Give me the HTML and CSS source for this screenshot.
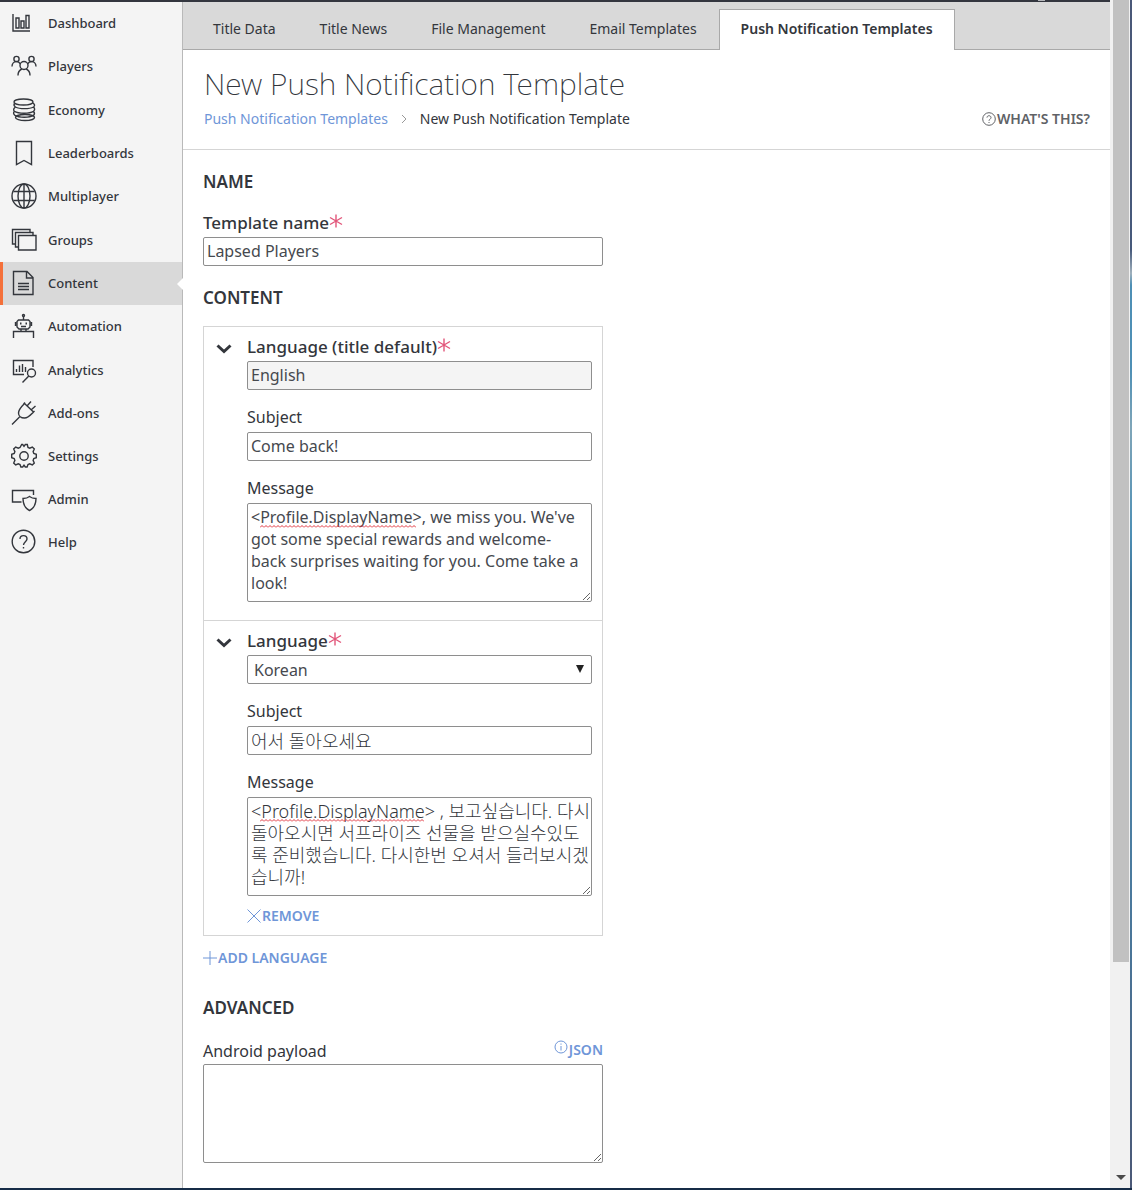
FILE: index.html
```
<!DOCTYPE html>
<html lang="en">
<head>
<meta charset="utf-8">
<title>New Push Notification Template</title>
<meta name="viewport" content="width=device-width, initial-scale=1">
<link rel="stylesheet" href="styles.css">
</head>
<body>
<svg class="defs" aria-hidden="true">
  <symbol id="star" viewBox="0 0 14 14"><path d="M7 .5v13M1 3.500l12 7M13 3.500l-12 7"/></symbol>
  <symbol id="chevron" viewBox="0 0 16 10"><path d="M1.500 1.500L8 7.500l6.500-6"/></symbol>
  <pattern id="wave" width="4" height="3" patternUnits="userSpaceOnUse"><path d="M0 2.500L2 .5l2 2" fill="none" stroke="#e0323c"/></pattern>
</svg>
<div class="window">
  <div class="page">
    <div class="topbar"><span class="topbar-mark"></span></div>
    <div class="app">
      <nav class="sidebar" aria-label="Main">
        <a href="#"><svg viewBox="0 0 26 26"><path d="M2 4v17h17M5 8h3v10H5zM10 11h3v7h-3zM15 5.500h3V18h-3z"/></svg>Dashboard</a>
        <a href="#"><svg viewBox="0 0 26 26"><circle cx="5.500" cy="6" r="2.600"/><circle cx="20.500" cy="6" r="2.600"/><circle cx="13" cy="12.500" r="4"/><path d="M1 13.500c0-3 2-5 4.500-5 2 0 3 1 4 2.500M25 13.500c0-3-2-5-4.500-5-2 0-3 1-4 2.500M7 22.500c0-3.500 1.500-5.500 3.800-6.500M19 22.500c0-3.500-1.500-5.500-3.800-6.500"/></svg>Players</a>
        <a href="#"><svg viewBox="0 0 26 26"><ellipse cx="12.500" cy="5" rx="9.500" ry="3"/><path d="M3.500 6.500C2.500 8 3 9 4.500 10c4 2.200 14 2.200 18 0 1.500-1 1.500-2.500-.5-4M4.500 10C2.500 11.500 2 13 3.500 14.300c4 2.500 15 2.500 19 0 1.500-1.300 1.500-2.800 0-4.300M3.500 14.300c-1.500 1.500-1 3 .5 4 4 2.500 14.500 2.500 18.500 0 1.200-1 1.200-2.500 0-4"/><ellipse cx="14" cy="20.500" rx="9.500" ry="3"/></svg>Economy</a>
        <a href="#"><svg viewBox="0 0 26 26"><path d="M5.500 1.500h15V24.500L13 20.500l-7.500 4z"/></svg>Leaderboards</a>
        <a href="#"><svg viewBox="0 0 26 26"><circle cx="13" cy="13" r="12"/><ellipse cx="13" cy="13" rx="6" ry="12"/><path d="M13 1v24M2.500 8.500h21M2.500 17.500h21"/></svg>Multiplayer</a>
        <a href="#"><svg viewBox="0 0 26 26"><path d="M7.500 8.500h17.500v14.500H7.500zM7.500 20H4.500V5.500h17.500v3M4.500 17H1.500V2.500h17.500v3"/></svg>Groups</a>
        <a href="#" class="current" aria-current="page"><svg viewBox="0 0 26 26"><path d="M2.500 1.500h13.500l6 6V24.500H2.500zM15.500 1.500v6.500H22M7 13.500h11M7 16.500h11M7 19.500h11"/></svg>Content</a>
        <a href="#"><svg viewBox="0 0 26 26"><circle cx="12.500" cy="2.500" r="1"/><path d="M12.500 3.500V7M7.500 7h10l1.500 1.500V14l-2 2H8l-2-2V8.500zM4.500 9v4M20.500 9v4M10 16v2.500M15 16v2.500M2.500 25v-6.500h20V25M10 13.500h5"/><path d="M9 10.500h1.500M14.500 10.500H16" stroke-width="2"/></svg>Automation</a>
        <a href="#"><svg viewBox="0 0 26 26"><path d="M13 17.500H2.500v-14H22V10M5.500 15v-3M8.500 15V8.500M11.500 15V7M14.500 15v-5"/><circle cx="20.500" cy="16" r="4"/><path d="M17.800 19l-6.300 6.500"/></svg>Analytics</a>
        <a href="#"><svg viewBox="0 0 26 26"><path d="M1 24.500l7.500-7.500M7.500 13c0-3.500 3.500-7 6-9.500l9 8.500c-3 3-5 6-9 6-3.500 0-6-2-6-5zM12.500 4l1.500-1.500M22 12.500l1.500-1.500M16 6l4-4.500M20 10l4.500-4"/></svg>Add-ons</a>
        <a href="#"><svg viewBox="0 0 26 26"><circle cx="13" cy="13" r="4.200"/><path d="M10.700 1.500h1l1.300 1.800 1.300-1.800h2l.7 3 1.700.7 2.600-1.200 2 2-1.200 2.600.7 1.900 2.500.8v3.400l-2.500.8-.7 1.900 1.200 2.600-2 2-2.600-1.200-1.700.7-.9 2.500h-1.800l-1.300-1.800-1.300 1.800h-1.800l-.9-2.500-1.700-.7-2.600 1.200-2-2 1.200-2.600-.7-1.900-2.500-.8v-3.400l2.500-.8.7-1.900-1.200-2.600 2-2 2.600 1.200 1.700-.7z"/></svg>Settings</a>
        <a href="#"><svg viewBox="0 0 26 26"><path d="M10.500 16H1.500V4.500H22.500V9M18.500 10.500c1.800 1.500 4 2 6.500 2 0 6-1.500 9.500-6.500 12-5-2.500-6.500-6-6.500-12 2.500 0 4.700-.5 6.500-2z"/></svg>Admin</a>
        <a href="#"><svg viewBox="0 0 26 26"><circle cx="12.500" cy="12.500" r="11.300"/><path d="M9 10c0-4.500 7-4.500 7 0 0 2.500-3.500 3-3.500 6M12.500 18v1.500"/></svg>Help</a>
      </nav>
      <main class="main">
        <nav class="tabs" aria-label="Content">
          <a href="#">Title Data</a>
          <a href="#">Title News</a>
          <a href="#">File Management</a>
          <a href="#">Email Templates</a>
          <a href="#" class="active" aria-current="page">Push Notification Templates</a>
        </nav>
        <header class="page-head">
          <h1>New Push Notification Template</h1>
          <div class="crumb-row">
            <a href="#" class="crumb-link">Push Notification Templates</a>
            <svg class="crumb-sep" viewBox="0 0 6 10"><path d="M1 1l4 4-4 4"/></svg>
            <span>New Push Notification Template</span>
            <button type="button" class="whats-this"><svg viewBox="0 0 14 14"><circle cx="7" cy="7" r="6.300"/><path d="M5 5.600c0-2.500 4-2.500 4 0 0 1.400-2 1.700-2 3.200M7 10v1"/></svg>WHAT'S THIS?</button>
          </div>
        </header>
        <form class="form">
          <h2>NAME</h2>
          <div class="field">
            <label class="strong" for="name">Template name<svg class="star"><use href="#star"/></svg></label>
            <input type="text" id="name" value="Lapsed Players">
          </div>

          <h2>CONTENT</h2>
          <div class="languages">
            <section class="language">
              <button type="button" class="toggle" aria-label="Collapse English"><svg><use href="#chevron"/></svg></button>
              <div class="fields">
                <div class="field">
                  <label class="strong" for="lang1">Language (title default)<svg class="star"><use href="#star"/></svg></label>
                  <input type="text" id="lang1" value="English" readonly>
                </div>
                <div class="field">
                  <label for="subject1">Subject</label>
                  <input type="text" id="subject1" value="Come back!">
                </div>
                <div class="field message">
                  <label for="message1">Message</label>
                  <textarea id="message1" spellcheck="false">&lt;Profile.DisplayName&gt;, we miss you. We've got some special rewards and welcome-back surprises waiting for you. Come take a look!</textarea>
                  <svg class="squiggle" aria-hidden="true"><rect width="100%" height="3" fill="url(#wave)"/></svg>
                </div>
              </div>
            </section>
            <section class="language">
              <button type="button" class="toggle" aria-label="Collapse Korean"><svg><use href="#chevron"/></svg></button>
              <div class="fields">
                <div class="field">
                  <label class="strong" for="lang2">Language<svg class="star"><use href="#star"/></svg></label>
                  <div class="select">
                    <select id="lang2"><option>Korean</option></select>
                    <svg viewBox="0 0 8 8" aria-hidden="true"><path d="M0 0h8L4 8z"/></svg>
                  </div>
                </div>
                <div class="field">
                  <label for="subject2">Subject</label>
                  <input type="text" id="subject2" class="korean" lang="ko" value="어서 돌아오세요">
                </div>
                <div class="field message">
                  <label for="message2">Message</label>
                  <textarea id="message2" class="korean" lang="ko" spellcheck="false">&lt;Profile.DisplayName&gt; , 보고싶습니다. 다시
돌아오시면 서프라이즈 선물을 받으실수있도
록 준비했습니다. 다시한번 오셔서 들러보시겠
습니까!</textarea>
                  <svg class="squiggle" aria-hidden="true"><rect width="100%" height="3" fill="url(#wave)"/></svg>
                </div>
                <button type="button" class="action remove"><svg viewBox="0 0 14 14"><path d="M.5.5l13 13M13.500.5l-13 13"/></svg>REMOVE</button>
              </div>
            </section>
          </div>
          <button type="button" class="action add"><svg viewBox="0 0 14 14"><path d="M7 0v14M0 7h14"/></svg>ADD LANGUAGE</button>

          <h2>ADVANCED</h2>
          <div class="field">
            <div class="label-row">
              <label for="android">Android payload</label>
              <a href="#" class="action"><svg class="info" viewBox="0 0 14 14"><circle cx="7" cy="7" r="6"/><path d="M7 6v4.500M7 3.500v1.200"/></svg>JSON</a>
            </div>
            <textarea id="android"></textarea>
          </div>
        </form>
      </main>
    </div>
  </div>
  <div class="scrollbar" aria-hidden="true">
    <div class="thumb"></div>
    <svg viewBox="0 0 10 5"><path d="M0 0h10L5 5z"/></svg>
  </div>
  <div class="window-edge"></div>
</div>
<div class="window-foot"></div>
</body>
</html>
```
FILE: styles.css
```
* { box-sizing: border-box; }

body {
  display: flex;
  flex-direction: column;
  min-height: 100vh;
  margin: 0;
  background: #fff;
  color: #33363c;
  font: 400 16px/22px "Noto Sans", "Open Sans", "Noto Sans CJK KR", sans-serif;
}

svg { fill: none; stroke: currentColor; flex: none; }
a { color: inherit; text-decoration: none; }
button {
  display: flex;
  align-items: center;
  padding: 0;
  border: 0;
  background: none;
  color: inherit;
  font: inherit;
  cursor: pointer;
}

.defs { position: absolute; width: 0; height: 0; }

/* Window frame */
.window { display: flex; flex: 1; }
.page { display: flex; flex-direction: column; flex: 1; min-width: 0; }
.topbar {
  display: flex;
  justify-content: flex-end;
  height: 2px;
  padding-right: 65px;
  background: #33363f;
}
.topbar-mark { width: 7px; height: 1px; background: #b5b7bb; }
.app { display: flex; flex: 1; }
.window-edge {
  width: 2px;
  background: linear-gradient(#4a5878, #46597b 21%, #9fb0bc 23%, #4d8fb5 24%, #4d8fb5 31%, #7fa5b8 36%, #4d8fb5 45%, #3d6f93 50%, #4d86ab 60%, #4a7598 80%, #4b5876);
}
.window-foot { height: 2px; background: #162c47; }

.scrollbar {
  display: flex;
  flex-direction: column;
  align-items: center;
  justify-content: space-between;
  width: 20px;
  padding: 0 1px 0 3px;
  background: #f1f1f1;
}
.scrollbar .thumb { width: 100%; height: 81%; background: #c1c1c1; }
.scrollbar svg { width: 10px; height: 5px; margin-bottom: 8px; fill: #4a4a4a; stroke: none; }

/* Sidebar */
.sidebar {
  display: grid;
  grid-template-rows: repeat(3, 43px 43px 44px) repeat(4, 43px);
  align-content: start;
  width: 183px;
  border-right: 1px solid #b9b9b9;
  background: #f4f4f4;
  font-size: 13px;
  font-weight: 500;
}
.sidebar a {
  display: flex;
  align-items: center;
  gap: 11px;
  padding: 0 0 1px 11px;
}
.sidebar svg { width: 26px; height: 26px; stroke-width: 1.4; }
.sidebar .current {
  position: relative;
  padding-left: 8px;
  border-left: 3px solid #f4703a;
  background: #d9d9d9;
}
.sidebar .current::after {
  content: "";
  position: absolute;
  right: -1px;
  top: 50%;
  border: solid transparent;
  border-width: 6px 6px 6px 0;
  border-right-color: #fff;
  translate: 0 -50%;
}

/* Tabs */
.main { flex: 1; min-width: 0; }
.tabs {
  display: flex;
  align-items: flex-end;
  height: 48px;
  padding-left: 8px;
  border-bottom: 1px solid #a9a9a9;
  background: #d9d9d9;
  font-size: 14px;
}
.tabs a {
  height: 41px;
  margin-bottom: -1px;
  padding: 0 21px;
  border: 1px solid transparent;
  border-bottom: 0;
  line-height: 38px;
}
.tabs .active {
  border-color: #a9a9a9;
  background: #fff;
  font-weight: 600;
}

/* Page header */
.page-head { padding: 13px 20px 19px 21px; border-bottom: 1px solid #d5d5d5; }
h1 { margin: 0 0 2px; font-size: 30px; font-weight: 200; line-height: 42px; }
.crumb-row { display: flex; align-items: center; font-size: 14px; line-height: 23px; }
.crumb-link { color: #6f96d8; }
.crumb-sep { width: 6px; height: 10px; margin: 0 13px; color: #999; }
.whats-this { margin-left: auto; gap: 1px; color: #606266; font-weight: 600; }
.whats-this svg { width: 14px; height: 14px; }

/* Form */
.form { max-width: 440px; padding: 0 20px 24px; }
h2 { margin: 21px 0 17px; font-size: 17px; font-weight: 600; line-height: 22px; }
label { display: flex; padding-bottom: 2px; line-height: 25px; }
.strong { font-size: 17px; font-weight: 500; }
.star { width: 14px; height: 14px; margin-top: 4px; color: #e2567a; stroke-width: 1.4; }

input, textarea, select {
  display: block;
  width: 100%;
  margin: 0;
  border: 1px solid #8e8e8e;
  border-radius: 2px;
  background: #fff;
  color: #46494f;
  font: inherit;
}
input { height: 29px; padding: 0 3px 2px; }
input:read-only { background: #f4f4f4; }
textarea { height: 99px; padding: 2px 8px 2px 3px; resize: both; }
.korean { padding-right: 0; color: #33363c; font-size: 18px; font-weight: 300; }

.languages { border: 1px solid #d5d5d5; }
.language { display: flex; padding: 7px 10px 18px 12px; }
.language + .language { padding-bottom: 0; border-top: 1px solid #d5d5d5; }
.toggle { align-self: flex-start; width: 31px; height: 30px; }
.toggle svg { width: 16px; height: 10px; stroke-width: 3; }
.fields { flex: 1; min-width: 0; }
.field + .field { margin-top: 15px; }

.select { position: relative; }
select { appearance: none; height: 29px; padding: 0 6px; }
.select svg {
  position: absolute;
  top: 10px;
  right: 8px;
  width: 8px;
  height: 8px;
  fill: #222;
  stroke: none;
  pointer-events: none;
}

.message { position: relative; }
.squiggle {
  position: absolute;
  top: 49px;
  left: 13px;
  width: 156px;
  height: 3px;
  stroke: none;
  pointer-events: none;
}
.korean + .squiggle { width: 164px; }

.action { display: flex; align-items: center; gap: 1px; color: #6f96d8; font-size: 14px; font-weight: 600; }
.action svg { width: 14px; height: 14px; }
.remove { height: 39px; }
.add { height: 36px; margin-top: 4px; }
.label-row { display: flex; justify-content: space-between; }
.label-row label { padding: 3px 0 0; }
.action .info { align-self: flex-start; margin-top: 4px; }
```
